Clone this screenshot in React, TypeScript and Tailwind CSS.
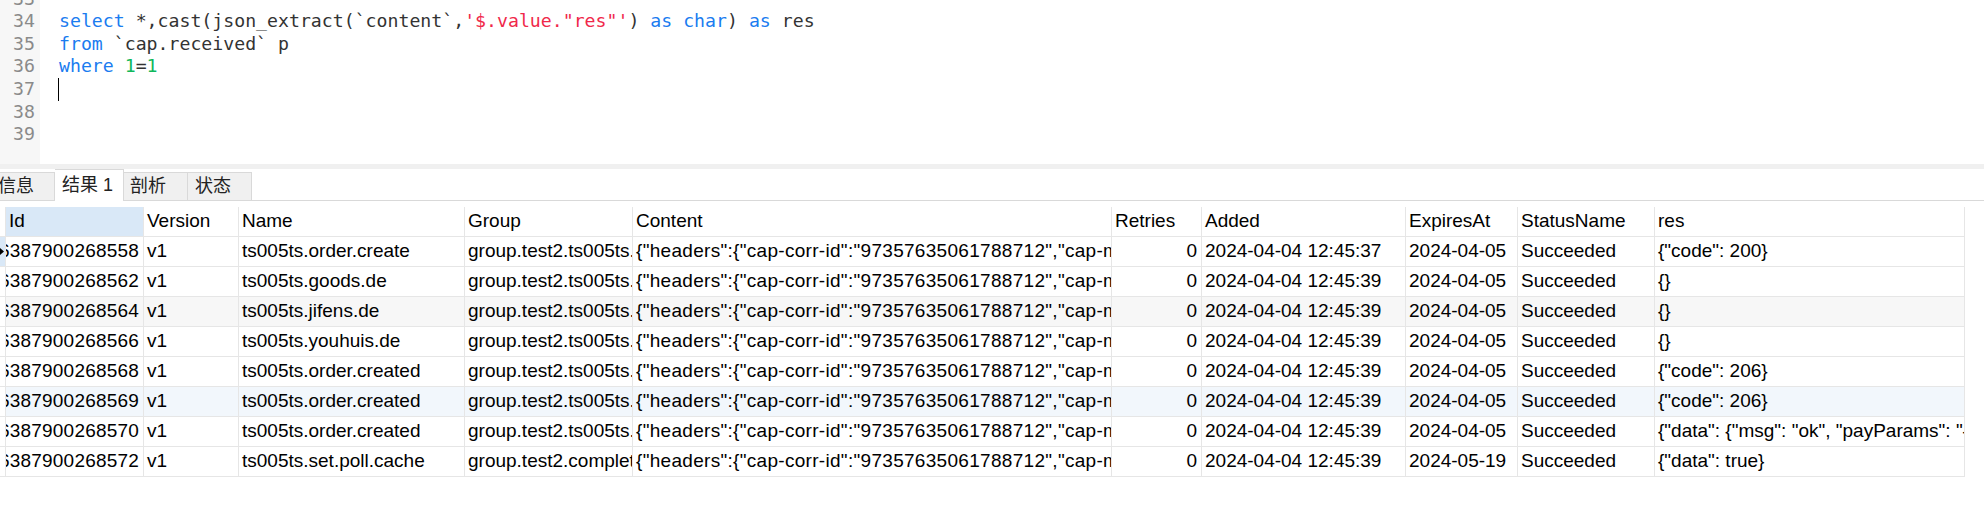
const mono = { fontFamily: '"DejaVu Sans Mono", "Liberation Mono", monospace' };

const content =
  '{"headers":{"cap-corr-id":"97357635061788712","cap-msg-id":"97357635061788712","cap-msg-name":"ts005ts"}}';

const rows = [
  { id: "6387900268558", name: "ts005ts.order.create", group: "group.test2.ts005ts.order", added: "2024-04-04 12:45:37", exp: "2024-04-05", res: '{"code": 200}' },
  { id: "6387900268562", name: "ts005ts.goods.de", group: "group.test2.ts005ts.goods", added: "2024-04-04 12:45:39", exp: "2024-04-05", res: "{}" },
  { id: "6387900268564", name: "ts005ts.jifens.de", group: "group.test2.ts005ts.jifens", added: "2024-04-04 12:45:39", exp: "2024-04-05", res: "{}" },
  { id: "6387900268566", name: "ts005ts.youhuis.de", group: "group.test2.ts005ts.youhuis", added: "2024-04-04 12:45:39", exp: "2024-04-05", res: "{}" },
  { id: "6387900268568", name: "ts005ts.order.created", group: "group.test2.ts005ts.order", added: "2024-04-04 12:45:39", exp: "2024-04-05", res: '{"code": 206}' },
  { id: "6387900268569", name: "ts005ts.order.created", group: "group.test2.ts005ts.order", added: "2024-04-04 12:45:39", exp: "2024-04-05", res: '{"code": 206}' },
  { id: "6387900268570", name: "ts005ts.order.created", group: "group.test2.ts005ts.order", added: "2024-04-04 12:45:39", exp: "2024-04-05", res: '{"data": {"msg": "ok", "payParams": "{\\"appId\\": \\"wx\\"}"}}' },
  { id: "6387900268572", name: "ts005ts.set.poll.cache", group: "group.test2.complete.cache", added: "2024-04-04 12:45:39", exp: "2024-05-19", res: '{"data": true}' },
];

const KW = "text-[#1a7cf0]";

function Editor() {
  const nums = [33, 34, 35, 36, 37, 38, 39];
  const lines: React.ReactNode[] = [
    null,
    <>
      <span className={KW}>select</span> *,cast(json_extract(`content`,
      <span className="text-[#f0284a]">'$.value."res"'</span>) <span className={KW}>as</span>{" "}
      <span className={KW}>char</span>) <span className={KW}>as</span> res
    </>,
    <>
      <span className={KW}>from</span> `cap.received` p
    </>,
    <>
      <span className={KW}>where</span> <span className="text-[#10b85a]">1</span>=
      <span className="text-[#10b85a]">1</span>
    </>,
    <span className="inline-block h-[23px] w-px -ml-px align-top bg-black" />,
    null,
    null,
  ];
  return (
    <div className="flex h-[164px] overflow-hidden bg-white" style={mono}>
      <div className="w-[40px] shrink-0 bg-[#f7f7f7] pr-[5px] text-right text-[18.2px] leading-[22.67px] text-[#8a8a8a]">
        <div className="-mt-[12.5px]">
          {nums.map((n) => (
            <div key={n} className="h-[22.67px]">{n}</div>
          ))}
        </div>
      </div>
      <div className="flex-1 pl-[19px] text-[18.2px] leading-[22.67px] text-[#333] whitespace-pre">
        <div className="-mt-[12.5px]">
          {lines.map((l, i) => (
            <div key={i} className="h-[22.67px]">{l}</div>
          ))}
        </div>
      </div>
    </div>
  );
}

function Tabs() {
  return (
    <div
      className="flex h-[32px] items-end border-b border-[#d9d9d9] bg-white text-[18px] text-[#222]"
      style={{ fontFamily: '"Liberation Sans", "Noto Sans CJK SC", sans-serif' }}
    >
      <div className="-ml-[9px] flex h-[28px] w-[64px] items-center border-r border-t border-[#d9d9d9] bg-[#f0f0f0] pl-[7px]">信息</div>
      <div className="relative z-10 -mb-px flex h-[32px] w-[69px] items-center border-r border-t border-[#d9d9d9] bg-white pl-[7px]">
        结果 1
      </div>
      <div className="flex h-[28px] w-[64px] items-center border-r border-t border-[#d9d9d9] bg-[#f0f0f0] pl-[6px]">剖析</div>
      <div className="flex h-[28px] w-[64px] items-center border-r border-t border-[#d9d9d9] bg-[#f0f0f0] pl-[7px]">状态</div>
    </div>
  );
}

const GRID = "grid grid-cols-[6px_138px_95px_226px_168px_479px_90px_204px_112px_137px_310px]";

function Cell({ children, right, className = "" }: { children?: React.ReactNode; right?: boolean; className?: string }) {
  return (
    <div
      className={`flex h-[30px] items-center overflow-hidden whitespace-nowrap border-b border-r border-[#e6e6e6] ${
        right ? "justify-end pr-[4px]" : "pl-[3px]"
      } ${className}`}
    >
      <span className="shrink-0">{children}</span>
    </div>
  );
}

function Grid() {
  const headers = ["Id", "Version", "Name", "Group", "Content", "Retries", "Added", "ExpiresAt", "StatusName", "res"];
  return (
    <div
      className={`${GRID} mt-[6px] w-[1965px] text-[19px] text-black`}
      style={{ fontFamily: '"Liberation Sans", Arial, sans-serif' }}
    >
      <Cell />
      {headers.map((h) => (
        <Cell key={h} className={h === "Id" ? "bg-[#d9e8f7]" : "bg-white"}>
          {h}
        </Cell>
      ))}
      {rows.map((r, i) => {
        const bg = i === 2 ? "bg-[#f7f7f7]" : i === 5 ? "bg-[#f2f7fc]" : "bg-white";
        return [
          <div
            key={`ind${i}`}
            className={`relative h-[30px] border-b border-r border-[#e6e6e6] ${i === 0 ? "bg-[#d9e8f7]" : "bg-white"}`}
          >
            {i === 0 && (
              <svg className="absolute left-0 top-[11px]" width="4" height="7" viewBox="0 0 4 7">
                <polygon points="0,0 4,3.5 0,7" fill="#000" />
              </svg>
            )}
          </div>,
          <Cell key={`id${i}`} right className={`${bg} tracking-[0.2px]`}>{r.id}</Cell>,
          <Cell key={`v${i}`} className={bg}>v1</Cell>,
          <Cell key={`n${i}`} className={bg}>{r.name}</Cell>,
          <Cell key={`g${i}`} className={bg}>{r.group}</Cell>,
          <Cell key={`c${i}`} className={`${bg} tracking-[0.3px]`}>{content}</Cell>,
          <Cell key={`rt${i}`} right className={bg}>0</Cell>,
          <Cell key={`a${i}`} className={bg}>{r.added}</Cell>,
          <Cell key={`e${i}`} className={bg}>{r.exp}</Cell>,
          <Cell key={`s${i}`} className={bg}>Succeeded</Cell>,
          <Cell key={`r${i}`} className={bg}>{r.res}</Cell>,
        ];
      })}
    </div>
  );
}

export default function App() {
  return (
    <div className="h-[510px] w-[1984px] overflow-hidden bg-white">
      <Editor />
      <div className="h-[5px] bg-[#f0f0f0]" />
      <Tabs />
      <Grid />
    </div>
  );
}
